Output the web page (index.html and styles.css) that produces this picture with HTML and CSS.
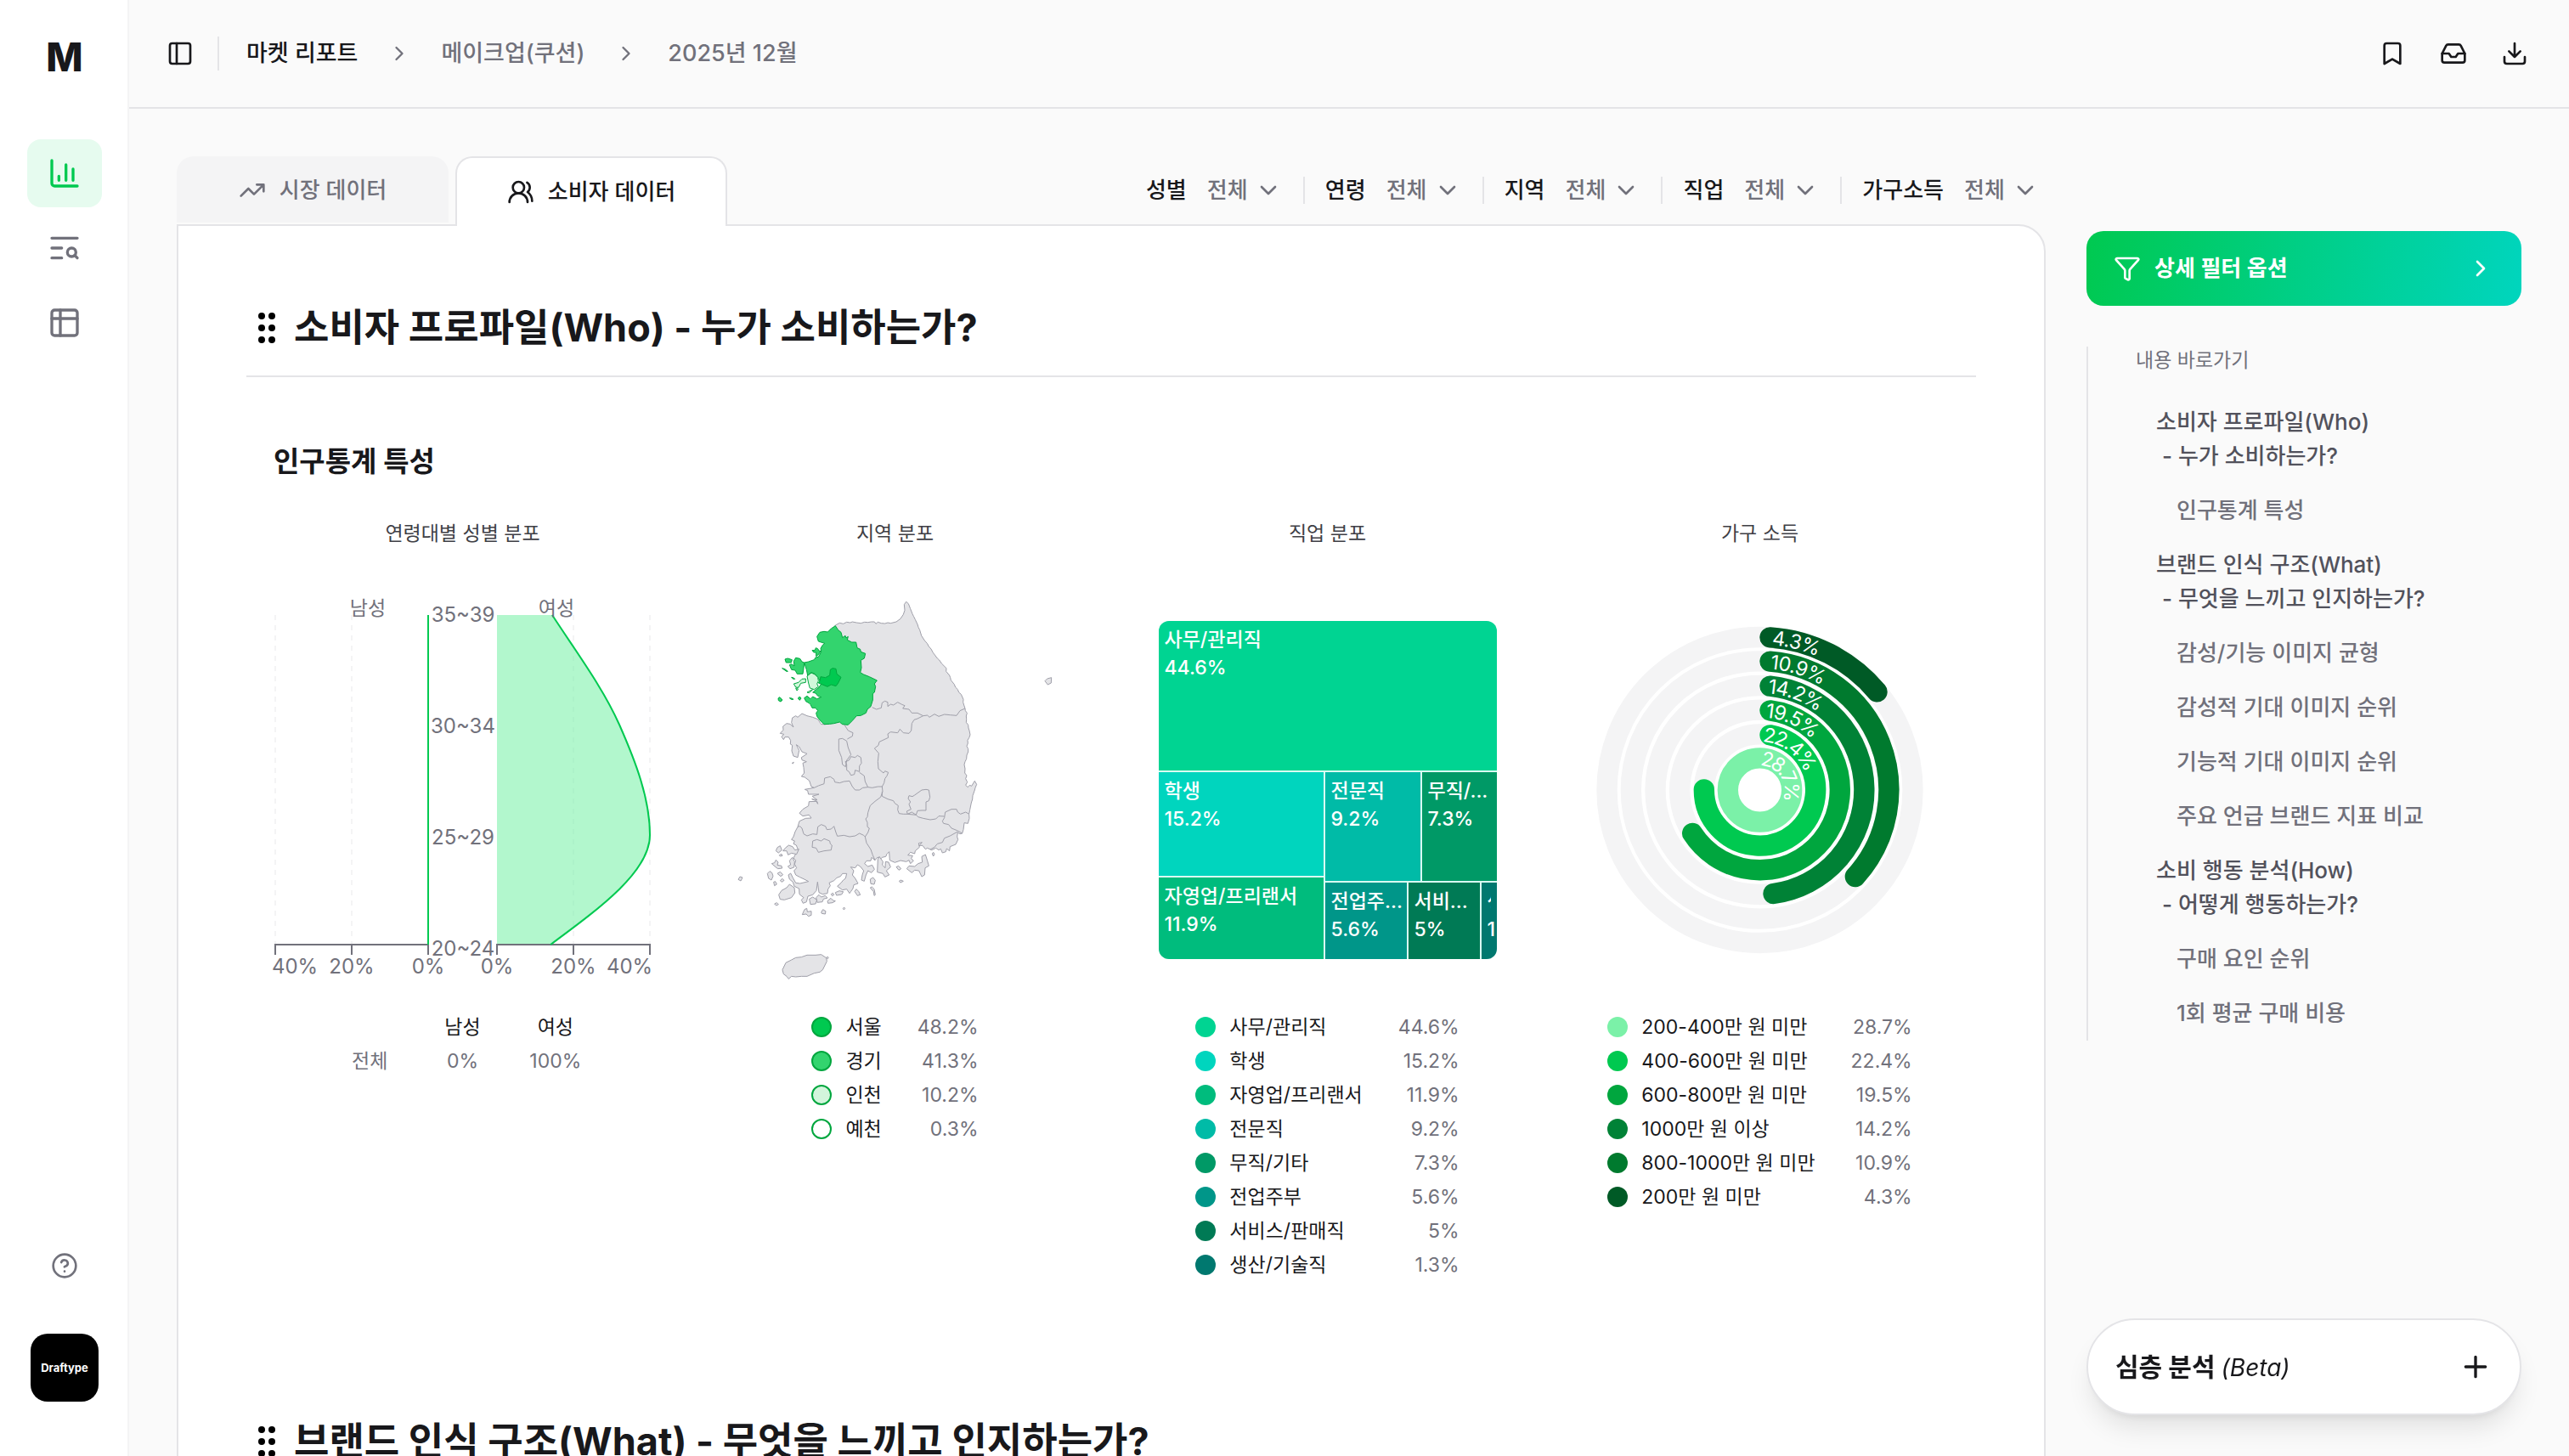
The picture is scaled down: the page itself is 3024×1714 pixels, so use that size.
FILE: index.html
```html
<!DOCTYPE html>
<html lang="ko">
<head>
<meta charset="utf-8">
<meta name="viewport" content="width=device-width, initial-scale=1">
<title>마켓 리포트</title>
<link rel="stylesheet" href="styles.css">
</head>
<body>
<div class="app">
  <aside class="sidebar">
    <a class="logo" href="#">M</a>
    <nav class="side-nav">
      <a class="side-link active" href="#" aria-label="리포트">
        <svg class="icon icon-lg" viewBox="0 0 24 24"><path d="M3 3v16a2 2 0 0 0 2 2h16M8 17v-3M13 17V6M18 17V9"/></svg>
      </a>
      <a class="side-link" href="#" aria-label="검색">
        <svg class="icon icon-lg" viewBox="0 0 24 24"><path d="M21 5H3M10 12H3M10 19H3"/><circle cx="17" cy="15" r="3"/><path d="m21 19-1.9-1.9"/></svg>
      </a>
      <a class="side-link" href="#" aria-label="표">
        <svg class="icon icon-lg" viewBox="0 0 24 24"><rect x="3" y="3" width="18" height="18" rx="2"/><path d="M3 9h18M9 3v18"/></svg>
      </a>
    </nav>
    <div class="side-foot">
      <a class="side-link" href="#" aria-label="도움말">
        <svg class="icon" viewBox="0 0 24 24"><circle cx="12" cy="12" r="10"/><path d="M9.1 9a3 3 0 0 1 5.8 1c0 2-3 3-3 3M12 17h.01"/></svg>
      </a>
      <button class="avatar" type="button">Draftype</button>
    </div>
  </aside>

  <div class="main">
    <header class="topbar">
      <button class="icon-btn" type="button" aria-label="사이드바">
        <svg class="icon" viewBox="0 0 24 24"><rect x="3" y="3" width="18" height="18" rx="2"/><path d="M9 3v18"/></svg>
      </button>
      <nav class="crumbs">
        <a class="current" href="#">마켓 리포트</a>
        <svg class="icon icon-sm" viewBox="0 0 24 24"><path d="m9 18 6-6-6-6"/></svg>
        <a href="#">메이크업(쿠션)</a>
        <svg class="icon icon-sm" viewBox="0 0 24 24"><path d="m9 18 6-6-6-6"/></svg>
        <a href="#">2025년 12월</a>
      </nav>
      <div class="actions">
        <button class="icon-btn" type="button" aria-label="북마크"><svg class="icon" viewBox="0 0 24 24"><path d="m19 21-7-4-7 4V5a2 2 0 0 1 2-2h10a2 2 0 0 1 2 2z"/></svg></button>
        <button class="icon-btn" type="button" aria-label="보관함"><svg class="icon" viewBox="0 0 24 24"><path d="M22 12h-6l-2 3h-4l-2-3H2"/><path d="M5.45 5.11 2 12v6a2 2 0 0 0 2 2h16a2 2 0 0 0 2-2v-6l-3.450-6.890A2 2 0 0 0 16.760 4H7.240a2 2 0 0 0-1.790 1.110z"/></svg></button>
        <button class="icon-btn" type="button" aria-label="다운로드"><svg class="icon" viewBox="0 0 24 24"><path d="M12 15V3M21 15v4a2 2 0 0 1-2 2H5a2 2 0 0 1-2-2v-4M7 10l5 5 5-5"/></svg></button>
      </div>
    </header>

    <div class="body">
      <main class="content">
        <div class="toolbar">
          <div class="tabs">
            <button class="tab" type="button"><svg class="icon" viewBox="0 0 24 24"><path d="M22 7l-8.500 8.500-5-5L2 17M16 7h6v6"/></svg>시장 데이터</button>
            <button class="tab selected" type="button"><svg class="icon" viewBox="0 0 24 24"><path d="M18 21a8 8 0 0 0-16 0"/><circle cx="10" cy="8" r="5"/><path d="M22 20c0-3.370-2-6.500-4-8a5 5 0 0 0-.450-8.300"/></svg>소비자 데이터</button>
          </div>
          <div class="filters">
            <label class="filter">성별<span class="pick"><select><option>전체</option></select><svg class="icon" viewBox="0 0 24 24"><path d="m6 9 6 6 6-6"/></svg></span></label>
            <label class="filter">연령<span class="pick"><select><option>전체</option></select><svg class="icon" viewBox="0 0 24 24"><path d="m6 9 6 6 6-6"/></svg></span></label>
            <label class="filter">지역<span class="pick"><select><option>전체</option></select><svg class="icon" viewBox="0 0 24 24"><path d="m6 9 6 6 6-6"/></svg></span></label>
            <label class="filter">직업<span class="pick"><select><option>전체</option></select><svg class="icon" viewBox="0 0 24 24"><path d="m6 9 6 6 6-6"/></svg></span></label>
            <label class="filter">가구소득<span class="pick"><select><option>전체</option></select><svg class="icon" viewBox="0 0 24 24"><path d="m6 9 6 6 6-6"/></svg></span></label>
          </div>
        </div>

        <div class="card">
          <section>
            <h2 class="section-title">
              <svg class="grip" viewBox="0 0 20 40"><circle cx="4" cy="6" r="4"/><circle cx="16" cy="6" r="4"/><circle cx="4" cy="20" r="4"/><circle cx="16" cy="20" r="4"/><circle cx="4" cy="34" r="4"/><circle cx="16" cy="34" r="4"/></svg>
              소비자 프로파일(Who) - 누가 소비하는가?
            </h2>
            <h3 class="sub-title">인구통계 특성</h3>
            <div class="charts">
              <article class="chart">
                <h4>연령대별 성별 분포</h4>
                <svg class="plot" viewBox="290 680 509 500">
                  <path class="grid-line" d="M324 724V1112M414 724V1112M675 724V1112M765 724V1112"/>
                  <path class="area" d="M585 724H650C678 767 710 810 729 853C748 896 765 940 765 983C765 1026 706 1069 648 1112H585Z"/>
                  <path class="axis" d="M324 1124V1112H504V1124M414 1112V1124M585 1124V1112H765V1124M675 1112V1124"/>
                  <path class="curve" d="M504 724V1112M650 724C678 767 710 810 729 853C748 896 765 940 765 983C765 1026 706 1069 648 1112"/>
                  <g class="tick">
                    <text class="ko" x="433" y="724">남성</text><text class="ko" x="655" y="724">여성</text>
                    <text x="545" y="732">35~39</text><text x="545" y="863">30~34</text><text x="545" y="994">25~29</text><text x="545" y="1125">20~24</text>
                    <text x="347" y="1146">40%</text><text x="414" y="1146">20%</text><text x="504" y="1146">0%</text>
                    <text x="585" y="1146">0%</text><text x="675" y="1146">20%</text><text x="741" y="1146">40%</text>
                  </g>
                </svg>
                <table class="ratio">
                  <tr><td></td><th>남성</th><th>여성</th></tr>
                  <tr><td class="ko">전체</td><td>0%</td><td>100%</td></tr>
                </table>
              </article>

              <article class="chart">
                <h4>지역 분포</h4>
                <svg class="plot" viewBox="0 0 1281 1500">
                  <g class="land">
                    <path d="M430 168L445 160 458 163 470 157 482 159 490 156 505 159 520 161 533 157 545 158 557 156 568 156 573 163 580 157 592 161 605 162 615 159 625 161 645 156 660 145 670 130 675 115 673 95 680 85 688 92 695 110 702 128 706 136 712 148 720 165 723 175 728 185 734 205 745 222 754 232 760 243 768 252 775 265 790 285 797 291 805 303 822 320 821 331 833 345 836 353 838 362 850 377 854 387 862 395 866 405 874 412 882 430 881 440 884 450 888 462 889 470 895 478 892 489 893 500 892 511 899 520 900 531 903 540 906 555 902 566 897 574 898 585 894 595 899 605 899 615 894 627 893 640 888 650 885 660 888 675 887 690 894 699 890 710 896 722 890 733 898 740 904 733 911 736 922 718 929 730 924 742 922 750 915 770 914 783 910 795 905 820 902 835 903 850 898 868 885 866 882 890 878 903 870 905 862 900 860 915 863 925 855 942 835 950 833 965 823 957 820 968 808 972 802 958 795 962 785 955 770 962 755 955 748 959 738 946 726 946 736 935 724 938 727 952 712 965 710 975 695 970 686 980 703 982 698 992 706 1000 695 1010 690 998 680 1003 660 999 640 1006 622 998 620 968 612 976 608 985 595 988 590 993 578 988 570 998 558 988 555 1000 540 1000 533 1010 545 1020 560 1015 568 1030 557 1042 545 1035 538 1050 532 1072 522 1068 525 1050 530 1035 518 1020 508 1014 500 1025 484 1022 495 1035 490 1050 500 1062 510 1080 495 1085 492 1098 485 1108 480 1115 470 1100 455 1103 437 1090 450 1078 458 1068 466 1062 470 1045 455 1045 448 1055 435 1060 425 1070 408 1078 412 1088 404 1100 402 1115 385 1118 372 1112 367 1075 363 1105 350 1120 333 1125 328 1145 316 1150 310 1138 318 1130 303 1118 302 1098 285 1090 280 1075 268 1065 264 1050 272 1044 280 1060 290 1078 305 1080 335 1073 318 1064 305 1058 290 1050 284 1035 293 1025 286 1012 290 998 282 990 292 972 298 960 292 945 282 940 286 930 275 925 282 915 288 897 297 880 303 860 325 850 345 849 337 838 315 842 303 832 315 818 335 806 337 791 365 790 368 799 362 788 347 782 366 785 348 772 372 765 335 765 332 752 322 748 355 742 345 738 338 717 322 705 310 702 320 690 318 670 315 655 328 650 312 644 310 635 318 630 330 622 312 615 302 597 292 590 302 610 297 635 282 630 276 612 278 592 271 588 272 575 265 563 252 563 247 572 240 562 248 553 235 550 246 538 245 525 258 515 270 517 282 528 275 512 278 495 290 488 297 493 312 480 330 488 350 493 368 500 380 518 395 518 395 300Z"/>
                    <path d="M560 458L575 465 592 460 595 442 605 436 615 440 615 455 625 447 635 450 650 440 665 448 675 452 668 462 690 465 700 478 720 478 740 488 755 486 762 493 780 482 795 490 815 483 835 485 858 487 870 470 888 462"/>
                    <path d="M740 488L720 498 708 502 700 515 698 540 690 550 670 548 658 535 650 548 625 545 615 552 617 565 600 573 585 580 582 592 568 603 583 620 580 650 582 675 600 690 605 683 617 688 612 700 605 710 602 725 595 738 597 755 590 775 570 790 553 805 545 830 543 845 537 852 543 865 543 880 550 885 545 900 535 915 540 937 555 960 562 980 570 998"/>
                    <path d="M462 520L475 540 492 548 490 560 472 570M355 742L370 735 390 728 392 708 412 703 425 712 428 722 445 725 460 720 480 718 490 738 500 750 515 750 527 742 545 740 560 742 580 738 595 738M515 688L532 700 535 720 545 740"/>
                    <path d="M442 570L455 568 470 577 475 600 485 625 470 645 466 668 455 660 452 635 442 610ZM485 632L500 635 508 628 520 635 522 655 515 665 515 685 500 680 497 695 485 698 478 685 470 680 470 660 465 650 478 645Z"/>
                    <path d="M595 755L595 772 615 782 635 788 640 797 652 805 650 820 655 833 670 835 685 835 715 838 722 845 740 850 765 855 785 852 795 842 815 843"/>
                    <path d="M750 748L760 750 764 775 760 788 750 792 750 822 735 822 720 823 715 838 700 828 685 835 682 825 697 818 690 800 695 792 687 780 690 770 702 773 710 768 735 750Z"/>
                    <path d="M878 903L860 893 840 885 830 872 812 868 808 860 815 848 818 828 840 818 858 818 862 828 872 835 890 828 902 835M862 897L835 912 815 920 808 935 790 940 780 952 765 960"/>
                    <path d="M297 880L305 878 312 885 318 905 330 912 350 905 365 907 368 880 380 872 395 878 400 890 415 888 425 878 432 900 437 913 460 910 480 915 500 912 515 903 530 910 535 915"/>
                    <path d="M350 930L365 925 380 930 390 922 410 930 412 940 418 945 415 962 390 965 370 970 362 955 348 952Z"/>
                    <path d="M243 1385L255 1360 275 1350 290 1342 310 1340 330 1333 360 1333 380 1331 398 1343 400 1355 385 1385 375 1393 355 1397 330 1408 310 1408 290 1410 275 1408 265 1417 258 1408 247 1400ZM398 1342l5 -3 3 3 -3 4z"/>
                    <path d="M1170 365L1178 357 1193 353 1192 372 1180 378ZM87 1066l6 -10 9 3 -6 12z"/>
                    <path d="M580 995L585 985 598 1003 596 1015 606 1025 607 1003 618 1005 625 1022 610 1035 620 1050 605 1057 598 1045 578 1040Z"/>
                    <path d="M735 985L748 978 755 1000 760 1018 747 1025 745 1050 735 1056 725 1035 710 1033 700 1042 682 1028 690 1018 710 1020 722 1010 737 1005Z"/>
                    <path d="M230 1120L240 1105 258 1095 268 1083 285 1095 287 1113 275 1130 250 1138 235 1136ZM220 965l5 -12 10 -6 6 15 -12 10zM245 965l8 -10 12 -10 14 5 8 12 14 -3 -8 18 -18 -4 -12 6 -5 -14zM232 980l8 -4 3 6 -8 2zM205 1010l10 -3 5 -10 8 8 -3 10 15 3 2 8 -15 2 -8 -6zM190 1045l8 -8 8 5 4 12 -6 14 -10 -6zM225 1045l10 -6 10 10 -8 6zM212 1075l6 -2 5 10 -8 5zM235 1070l8 -7 6 6 -8 6zM268 1000l10 -12 8 15 -2 20 -14 5 -8 -8 10 -6zM215 1152l8 -4 6 6 -8 4z"/>
                    <path d="M338 1135l12 -7 15 10 -5 14 -18 2zM362 1130l10 -10 8 8 14 -5 8 8 -14 4 -4 10 -18 2zM402 1142l12 -10 8 8 8 2 -10 6 -16 2zM415 1118l6 -4 4 6 -6 4zM430 1112l14 -6 14 3 -6 10 -18 3zM498 1108l6 -8 8 8 6 12 -10 3zM553 1065l10 -6 8 10 -4 14 -12 -2zM553 1095l6 -3 8 8 4 20 -4 3 -2 -14zM313 1190l8 -18 8 -4 2 12 14 -2 0 14 -10 4 -8 -8zM380 1182l6 -10 10 6 -2 10 -12 -2zM457 1168l4 -4 3 5 -4 4zM655 1072l6 -4 9 4 -10 5zM645 1022l8 -4 9 10 -8 5zM772 975l4 -5 4 6 -4 8zM277 655l6 -3 -3 5z"/>
                  </g>
                  <g class="hot">
                    <path class="gyeonggi" d="M430 170L440 185 450 193 455 212 465 205 468 213 475 208 472 220 488 228 503 228 507 248 518 253 520 262 536 268 532 285 520 292 522 318 518 335 530 342 550 350 577 363 568 375 572 385 568 405 562 410 562 432 555 455 543 465 538 478 520 487 505 488 490 505 475 520 455 518 445 510 425 515 410 517 390 518 375 503 365 490 362 478 368 470 360 460 348 460 342 448 337 443 326 437 320 425 330 418 342 428 350 420 365 428 380 422 368 418 360 408 350 405 362 395 372 388 380 375 370 355 358 340 345 335 332 345 328 325 320 300 335 297 355 290 360 282 370 280 380 262 378 250 385 238 392 232 370 225 365 208 375 193 390 190 403 192 415 180Z"/>
                    <path class="gyeonggi" d="M283 295L290 283 305 286 312 297 320 300 318 320 315 340 295 340 288 327 275 325 268 308 275 305 285 312ZM252 288l10 -3 15 5 -3 10 -18 0zM348 257l10 -1 3 -8 7 3 4 7 6 2 -8 12 -8 6 0 -14 -8 0zM242 320l10 3 10 8 -5 0 -8 -6zM275 352l8 2 4 4 -6 0zM228 426l6 -4 9 10 -6 6 -8 -4zM268 425l8 1 6 4 -8 0zM298 426l6 -6 5 6 -5 7z"/>
                    <path class="incheon" d="M330 348L345 336 358 342 368 352 370 365 365 375 370 385 355 395 340 390 335 372ZM283 375L300 370 312 358 325 357 325 370 308 373 300 388 290 387ZM290 390l6 0 2 6 -4 3zM350 395l-20 10 8 2z"/>
                    <path class="seoul" d="M378 350L395 353 410 345 412 325 420 320 432 322 435 340 450 352 440 372 432 383 415 378 402 385 385 378 370 372 375 365Z"/>
                  </g>
                </svg>
                <table class="legend">
                  <tr><td><i class="dot region seoul"></i></td><th>서울</th><td>48.2%</td></tr>
                  <tr><td><i class="dot region gyeonggi"></i></td><th>경기</th><td>41.3%</td></tr>
                  <tr><td><i class="dot region incheon"></i></td><th>인천</th><td>10.2%</td></tr>
                  <tr><td><i class="dot region"></i></td><th>예천</th><td>0.3%</td></tr>
                </table>
              </article>

              <article class="chart">
                <h4>직업 분포</h4>
                <div class="plot tree-wrap">
                  <div class="tree">
                    <div class="cell job1"><b>사무/관리직</b>44.6%</div>
                    <div class="tree-left">
                      <div class="cell job2"><b>학생</b>15.2%</div>
                      <div class="cell job3"><b>자영업/프리랜서</b>11.9%</div>
                    </div>
                    <div class="tree-right">
                      <div class="tree-row upper">
                        <div class="cell job4"><b>전문직</b>9.2%</div>
                        <div class="cell job5"><b>무직/...</b>7.3%</div>
                      </div>
                      <div class="tree-row lower">
                        <div class="cell job6"><b>전업주...</b>5.6%</div>
                        <div class="cell job7"><b>서비...</b>5%</div>
                        <div class="cell job8"><b>생</b><span>1.3%</span></div>
                      </div>
                    </div>
                  </div>
                </div>
                <table class="legend">
                  <tr><td><i class="dot job1"></i></td><th>사무/관리직</th><td>44.6%</td></tr>
                  <tr><td><i class="dot job2"></i></td><th>학생</th><td>15.2%</td></tr>
                  <tr><td><i class="dot job3"></i></td><th>자영업/프리랜서</th><td>11.9%</td></tr>
                  <tr><td><i class="dot job4"></i></td><th>전문직</th><td>9.2%</td></tr>
                  <tr><td><i class="dot job5"></i></td><th>무직/기타</th><td>7.3%</td></tr>
                  <tr><td><i class="dot job6"></i></td><th>전업주부</th><td>5.6%</td></tr>
                  <tr><td><i class="dot job7"></i></td><th>서비스/판매직</th><td>5%</td></tr>
                  <tr><td><i class="dot job8"></i></td><th>생산/기술직</th><td>1.3%</td></tr>
                </table>
              </article>

              <article class="chart">
                <h4>가구 소득</h4>
                <svg class="plot" viewBox="-117 -120 1500 1500">
                  <g class="track">
                    <circle cx="633" cy="630" r="540"/><circle cx="633" cy="630" r="455"/><circle cx="633" cy="630" r="369"/><circle cx="633" cy="630" r="283"/><circle cx="633" cy="630" r="197"/>
                  </g>
                  <g class="bars">
                    <path stroke="#005a26" d="M669 91A540 540 0 0 1 1047 283"/>
                    <path stroke="#007a2e" d="M669 176A455 455 0 0 1 970 936"/>
                    <path stroke="#008236" d="M669 263A369 369 0 0 1 681 996"/>
                    <path stroke="#00a63e" d="M669 349A283 283 0 1 1 395 783"/>
                    <path stroke="#00c950" d="M669 436A197 197 0 1 1 436 628"/>
                    <circle stroke="#7bf1a8" cx="633" cy="630" r="113"/>
                  </g>
                  <defs>
                    <path id="ring1" d="M633 90A540 540 0 0 1 633 1170"/>
                    <path id="ring2" d="M633 175A455 455 0 0 1 633 1085"/>
                    <path id="ring3" d="M633 261A369 369 0 0 1 633 999"/>
                    <path id="ring4" d="M633 347A283 283 0 0 1 633 913"/>
                    <path id="ring5" d="M633 433A197 197 0 0 1 633 827"/>
                    <path id="ring6" d="M633 517A113 113 0 0 1 633 743"/>
                  </defs>
                  <g class="ring-label">
                    <text dy="26"><textPath href="#ring1" startOffset="45">4.3%</textPath></text>
                    <text dy="26"><textPath href="#ring2" startOffset="39">10.9%</textPath></text>
                    <text dy="26"><textPath href="#ring3" startOffset="31">14.2%</textPath></text>
                    <text dy="26"><textPath href="#ring4" startOffset="23">19.5%</textPath></text>
                    <text dy="26"><textPath href="#ring5" startOffset="14">22.4%</textPath></text>
                    <text dy="26"><textPath href="#ring6" startOffset="7">28.7%</textPath></text>
                  </g>
                </svg>
                <table class="legend">
                  <tr><td><i class="dot inc1"></i></td><th>200-400만 원 미만</th><td>28.7%</td></tr>
                  <tr><td><i class="dot inc2"></i></td><th>400-600만 원 미만</th><td>22.4%</td></tr>
                  <tr><td><i class="dot inc3"></i></td><th>600-800만 원 미만</th><td>19.5%</td></tr>
                  <tr><td><i class="dot inc4"></i></td><th>1000만 원 이상</th><td>14.2%</td></tr>
                  <tr><td><i class="dot inc5"></i></td><th>800-1000만 원 미만</th><td>10.9%</td></tr>
                  <tr><td><i class="dot inc6"></i></td><th>200만 원 미만</th><td>4.3%</td></tr>
                </table>
              </article>
            </div>
          </section>

          <section>
            <h2 class="section-title">
              <svg class="grip" viewBox="0 0 20 40"><circle cx="4" cy="6" r="4"/><circle cx="16" cy="6" r="4"/><circle cx="4" cy="20" r="4"/><circle cx="16" cy="20" r="4"/><circle cx="4" cy="34" r="4"/><circle cx="16" cy="34" r="4"/></svg>
              브랜드 인식 구조(What) - 무엇을 느끼고 인지하는가?
            </h2>
          </section>
        </div>
      </main>

      <aside class="rail">
        <button class="detail-filter" type="button">
          <svg class="icon" viewBox="0 0 24 24"><path d="M10 20a1 1 0 0 0 .553.895l2 1A1 1 0 0 0 14 21v-7a2 2 0 0 1 .517-1.341L21.740 4.670A1 1 0 0 0 21 3H3a1 1 0 0 0-.742 1.670l7.225 7.989A2 2 0 0 1 10 14z"/></svg>
          <span>상세 필터 옵션</span>
          <svg class="icon" viewBox="0 0 24 24"><path d="m9 18 6-6-6-6"/></svg>
        </button>
        <nav class="toc">
          <p>내용 바로가기</p>
          <a class="head" href="#">소비자 프로파일(Who)<br>&nbsp;- 누가 소비하는가?</a>
          <a href="#">인구통계 특성</a>
          <a class="head" href="#">브랜드 인식 구조(What)<br>&nbsp;- 무엇을 느끼고 인지하는가?</a>
          <a href="#">감성/기능 이미지 균형</a>
          <a href="#">감성적 기대 이미지 순위</a>
          <a href="#">기능적 기대 이미지 순위</a>
          <a href="#">주요 언급 브랜드 지표 비교</a>
          <a class="head" href="#">소비 행동 분석(How)<br>&nbsp;- 어떻게 행동하는가?</a>
          <a href="#">구매 요인 순위</a>
          <a href="#">1회 평균 구매 비용</a>
        </nav>
      </aside>
    </div>
  </div>

  <button class="analysis" type="button">
    <span>심층 분석 <em>(Beta)</em></span>
    <svg class="icon icon-lg" viewBox="0 0 24 24"><path d="M5 12h14M12 5v14"/></svg>
  </button>
</div>
</body>
</html>
```
FILE: styles.css
```css
* { box-sizing: border-box; }
body {
  margin: 0;
  background: #fafafa;
  color: #18181b;
  font-family: Inter, "Noto Sans CJK KR", sans-serif;
  font-size: 26px;
  line-height: 40px;
}
a { color: inherit; text-decoration: none; }
button { font: inherit; color: inherit; border: 0; background: none; padding: 0; }
h2, h3, h4, p { margin: 0; }
table { border-collapse: collapse; }
td, th { padding: 0; font-weight: 400; }

.icon {
  width: 32px;
  height: 32px;
  flex: none;
  display: block;
  fill: none;
  stroke: currentColor;
  stroke-width: 2;
  stroke-linecap: round;
  stroke-linejoin: round;
}
.icon-lg { width: 40px; height: 40px; }
.icon-sm { width: 28px; height: 28px; }

.app { display: flex; height: 100vh; }

/* Sidebar */
.sidebar {
  width: 152px;
  flex: none;
  display: flex;
  flex-direction: column;
  align-items: center;
  padding: 0 0 64px 2px;
  background: #fff;
  border-right: 2px solid #f4f4f5;
}
.logo { height: 164px; padding-top: 42px; font-size: 46px; line-height: 50px; font-weight: 800; }
.side-nav { display: flex; flex-direction: column; gap: 8px; }
.side-link {
  display: flex;
  align-items: center;
  justify-content: center;
  width: 88px;
  height: 80px;
  border-radius: 16px;
  color: #71717b;
}
.side-link.active { background: #e6fbef; color: #00c950; }
.side-foot { margin-top: auto; display: flex; flex-direction: column; align-items: center; gap: 40px; }
.avatar {
  width: 80px;
  height: 80px;
  border-radius: 20px;
  background: #000;
  color: #fff;
  font-size: 13px;
  font-weight: 700;
}

/* Top bar */
.main { flex: 1; min-width: 0; height: 100%; overflow-y: auto; scrollbar-width: none; }
.topbar {
  display: flex;
  align-items: center;
  height: 128px;
  padding: 0 48px 0 44px;
  border-bottom: 2px solid #e4e4e7;
}
.crumbs {
  display: flex;
  align-items: center;
  gap: 35px;
  height: 40px;
  margin-left: 28px;
  padding-left: 32px;
  border-left: 2px solid #e4e4e7;
  color: #71717b;
  font-size: 27px;
  font-weight: 500;
}
.crumbs .current { color: #18181b; }
.actions { display: flex; gap: 40px; margin-left: auto; }

/* Page body */
.body { display: flex; align-items: flex-start; gap: 48px; padding: 56px 56px 0; }
.content { flex: 1; min-width: 0; }
.toolbar { display: flex; justify-content: space-between; height: 80px; }
.tabs { display: flex; gap: 8px; }
.tab {
  display: flex;
  align-items: center;
  justify-content: center;
  gap: 16px;
  width: 320px;
  height: 78px;
  padding-top: 2px;
  border-radius: 20px 20px 0 0;
  background: #f4f4f5;
  color: #71717b;
  font-weight: 500;
}
.tab.selected {
  position: relative;
  height: 82px;
  padding-top: 0;
  background: #fff;
  color: #18181b;
  border: 2px solid #e4e4e7;
  border-bottom: 0;
}
.filters { display: flex; align-items: center; padding-right: 8px; }
.filter { display: flex; align-items: center; gap: 24px; height: 32px; font-weight: 500; }
.filter + .filter { margin-left: 25px; padding-left: 24px; border-left: 2px solid #e4e4e7; }
.pick { display: flex; align-items: center; gap: 8px; color: #71717b; }
.pick select {
  appearance: none;
  border: 0;
  padding: 0;
  background: none;
  font: inherit;
  color: inherit;
}
.card {
  padding: 88px 80px;
  background: #fff;
  border: 2px solid #e4e4e7;
  border-radius: 0 32px 0 0;
}
.card section + section { margin-top: 156px; }
.section-title {
  display: flex;
  align-items: center;
  gap: 22px;
  padding: 0 14px 24px;
  border-bottom: 2px solid #e4e4e7;
  font-size: 45px;
  line-height: 64px;
  font-weight: 700;
}
.grip { width: 20px; height: 40px; flex: none; }
.sub-title { margin-top: 75px; padding-left: 32px; font-size: 33px; line-height: 48px; font-weight: 700; }

/* Charts */
.charts { display: grid; grid-template-columns: repeat(4, minmax(0, 1fr)); margin-top: 45px; }
.chart { display: flex; flex-direction: column; align-items: center; font-size: 23px; }
.chart h4 { font-size: 23px; line-height: 32px; font-weight: 400; color: #3f3f46; }
.plot { display: block; width: 100%; height: 500px; margin: 36px 0 9px; }
.grid-line { stroke: #f4f4f5; stroke-width: 2; stroke-dasharray: 6 6; }
.area { fill: #7bf1a8; fill-opacity: .58; }
.axis { fill: none; stroke: #71717b; stroke-width: 2; }
.curve { fill: none; stroke: #00c950; stroke-width: 2; }
.tick { fill: #71717b; font-size: 24px; text-anchor: middle; }
.tick .ko { font-size: 23px; }
.ratio { table-layout: fixed; width: 328px; text-align: center; color: #71717b; }
.ratio th { color: #18181b; }
.ratio td { height: 40px; }

.land path { fill: #e4e4e7; stroke: #9f9fa9; stroke-width: 3; stroke-linejoin: round; }
.land path:nth-child(2), .land path:nth-child(3), .land path:nth-child(4),
.land path:nth-child(6), .land path:nth-child(8), .land path:nth-child(9) { fill: none; }
.hot path { stroke: #00a63e; stroke-width: 3; }
.seoul { fill: #00c950; background: #00c950; }
.gyeonggi { fill: #33d46e; background: #33d46e; }
.incheon { fill: #d0f8da; background: #d3f5dc; }

.legend th { padding: 0 42px 0 16px; text-align: left; }
.legend td { height: 40px; color: #71717b; text-align: right; }
.dot { display: block; width: 24px; height: 24px; border-radius: 50%; }
.dot.region { border: 2px solid #00a63e; }

.job1 { background: #00d492; }
.job2 { background: #00d5be; }
.job3 { background: #00bc7d; }
.job4 { background: #00bba7; }
.job5 { background: #009966; }
.job6 { background: #009689; }
.job7 { background: #007a55; }
.job8 { background: #00786f; }
.inc1 { background: #7bf1a8; }
.inc2 { background: #00c950; }
.inc3 { background: #00a63e; }
.inc4 { background: #008236; }
.inc5 { background: #007a2e; }
.inc6 { background: #005a26; }

.tree-wrap { display: flex; align-items: center; justify-content: center; }
.tree {
  display: grid;
  grid-template: 176px 220px / 194px 202px;
  gap: 2px;
  border-radius: 12px;
  overflow: hidden;
  background: #d9fbf3;
}
.tree > .cell { grid-column: 1 / 3; }
.tree-left { display: grid; grid-template-rows: 122px 96px; gap: 2px; }
.tree-right { display: grid; grid-template-rows: 128px 90px; gap: 2px; background: #d9fbf3; }
.tree-row { display: grid; gap: 2px; }
.upper { grid-template-columns: 112px 88px; }
.lower { grid-template-columns: 96px 84px 18px; }
.cell {
  padding: 6px 0 0 7px;
  overflow: hidden;
  white-space: nowrap;
  color: #fff;
  font-weight: 500;
  line-height: 32px;
}
.cell b { display: block; height: 33px; font-weight: 500; }
.cell.job8 b { width: 4px; overflow: hidden; }
.cell span { display: block; width: 9px; overflow: hidden; }

.track circle { fill: none; stroke: #f4f4f5; stroke-width: 73; }
.bars { fill: none; stroke-width: 73; stroke-linecap: round; }
.ring-label { fill: #fff; font-size: 70px; }

/* Right rail */
.rail { width: 512px; flex: none; padding-top: 88px; }
.detail-filter {
  display: flex;
  align-items: center;
  gap: 16px;
  width: 100%;
  height: 88px;
  padding: 0 32px;
  border-radius: 20px;
  background: linear-gradient(100deg, #00c950, #00d5be);
  color: #fff;
  font-weight: 600;
}
.detail-filter .icon:last-child { margin-left: auto; }
.toc {
  display: flex;
  flex-direction: column;
  gap: 24px;
  margin-top: 48px;
  padding: 0 0 12px 104px;
  border-left: 2px solid #e4e4e7;
  color: #71717b;
  font-weight: 500;
}
.toc p { margin: 0 0 13px -48px; font-size: 23px; line-height: 32px; font-weight: 400; }
.toc .head { margin-left: -24px; color: #52525c; }

/* Floating analysis button */
.analysis {
  position: fixed;
  right: 56px;
  bottom: 48px;
  display: flex;
  align-items: center;
  justify-content: space-between;
  width: 512px;
  height: 114px;
  padding: 0 32px;
  border: 2px solid #e4e4e7;
  border-radius: 57px;
  background: #fff;
  box-shadow: 0 20px 30px -6px rgba(0, 0, 0, .1), 0 8px 12px -8px rgba(0, 0, 0, .1);
  font-size: 30px;
  font-weight: 700;
}
.analysis em { font-size: 28px; font-weight: 400; }
```
